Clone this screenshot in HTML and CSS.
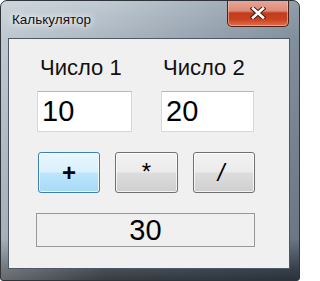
FILE: index.html
```html
<!DOCTYPE html>
<html lang="ru">
<head>
<meta charset="utf-8">
<title>Калькулятор</title>
<link rel="stylesheet" href="styles.css">
</head>
<body>
<div class="window">
  <div class="titlebar">
    <span class="title">Калькулятор</span>
    <div class="close">
      <svg width="16" height="12" viewBox="0 0 16 12" aria-hidden="true">
        <path d="M3 1.5 L13 10.5 M13 1.5 L3 10.5" stroke="#4a1a10" stroke-width="4.6" stroke-linecap="square" fill="none"/>
        <path d="M3 1.5 L13 10.5 M13 1.5 L3 10.5" stroke="#ffffff" stroke-width="2.6" stroke-linecap="square" fill="none"/>
      </svg>
    </div>
  </div>
  <div class="client">
    <div class="fields">
      <div class="field">
        <span class="label label-1">Число 1</span>
        <div class="input">10</div>
      </div>
      <div class="field field-2">
        <span class="label">Число 2</span>
        <div class="input">20</div>
      </div>
    </div>
    <div class="buttons">
      <button class="btn btn-hot">+</button>
      <button class="btn btn-star">*</button>
      <button class="btn btn-slash">/</button>
    </div>
    <div class="result">30</div>
  </div>
</div>
</body>
</html>
```
FILE: styles.css
```css
html, body {
  margin: 0;
  padding: 0;
  background: #ffffff;
}

.window {
  box-sizing: border-box;
  width: 300px;
  height: 281px;
  border: 1px solid #2f343a;
  border-radius: 7px 7px 3px 3px;
  background:
    linear-gradient(90deg, rgba(255,255,255,0.28) 0%, rgba(255,255,255,0.05) 35%, rgba(30,50,70,0.28) 100%),
    linear-gradient(180deg, #bdc7d0 0%, #a6b2bd 14%, #95a1ad 50%, #86929e 85%, #3e454d 96%, #2d3238 100%);
  display: flex;
  flex-direction: column;
  padding: 0 10px 12px 8px;
  font-family: "Liberation Sans", Arial, sans-serif;
  overflow: hidden;
}

.titlebar {
  height: 38px;
  display: flex;
  justify-content: space-between;
  align-items: flex-start;
  flex: none;
}

.title {
  margin-top: 11px;
  margin-left: 3px;
  font-size: 13.5px;
  color: #111;
  text-shadow: 0 0 6px #ffffff, 0 0 10px rgba(255,255,255,0.9);
}

.close {
  box-sizing: border-box;
  width: 62px;
  height: 27px;
  margin-top: -1px;
  border: 1px solid #4d2019;
  border-top: none;
  border-radius: 0 0 5px 5px;
  background: linear-gradient(180deg, #e9a999 0%, #dc8b77 42%, #c23a1e 50%, #c9431f 75%, #e0714c 100%);
  box-shadow: inset 0 0 0 1px rgba(255,200,180,0.55);
  display: flex;
  align-items: center;
  justify-content: center;
}

.close svg {
  display: block;
}

.client {
  flex: 1;
  background: #f0f0f0;
  box-shadow: 0 0 0 1px #4f5963;
  padding: 17px 0 0 28px;
}

.fields {
  display: grid;
  grid-template-columns: 95px 93px;
  column-gap: 29px;
}

.field {
  display: flex;
  flex-direction: column;
}

.label {
  font-size: 22px;
  line-height: 24px;
  color: #111;
  padding-left: 3px;
  height: 35px;
}

.field-2 .label {
  padding-left: 2px;
}

.input {
  box-sizing: border-box;
  height: 41px;
  background: #ffffff;
  border: 1px solid #d5d8de;
  border-top-color: #b5b8bf;
  font-size: 29px;
  line-height: 39px;
  padding-left: 4px;
  color: #000;
}

.buttons {
  display: flex;
  gap: 15px;
  margin-top: 20px;
  margin-left: 1px;
}

.btn {
  box-sizing: border-box;
  width: 62px;
  height: 41px;
  border: 1px solid #707070;
  border-radius: 3px;
  background: linear-gradient(180deg, #f2f2f2 0%, #ebebeb 49%, #dddddd 51%, #cfcfcf 100%);
  box-shadow: inset 0 0 0 1px rgba(255,255,255,0.75);
  font-family: "Liberation Sans", Arial, sans-serif;
  font-size: 22px;
  color: #000;
  padding: 0;
  display: flex;
  align-items: center;
  justify-content: center;
}

.btn-hot {
  border-color: #3c7fb1;
  background: linear-gradient(180deg, #eaf6fd 0%, #d9f0fc 49%, #bee6fd 51%, #a7d9f5 100%);
  font-weight: bold;
  font-size: 24px;
}

.btn-star {
  width: 63px;
  align-items: flex-start;
  padding-top: 5px;
  font-size: 24px;
}

.btn-slash {
  font-style: italic;
  font-size: 24px;
  padding-right: 6px;
}

.result {
  box-sizing: border-box;
  width: 219px;
  height: 34px;
  margin-top: 20px;
  margin-left: -1px;
  border: 1px solid #979898;
  background: #f0f0f0;
  text-align: center;
  font-size: 29px;
  line-height: 32px;
  color: #000;
}
```
